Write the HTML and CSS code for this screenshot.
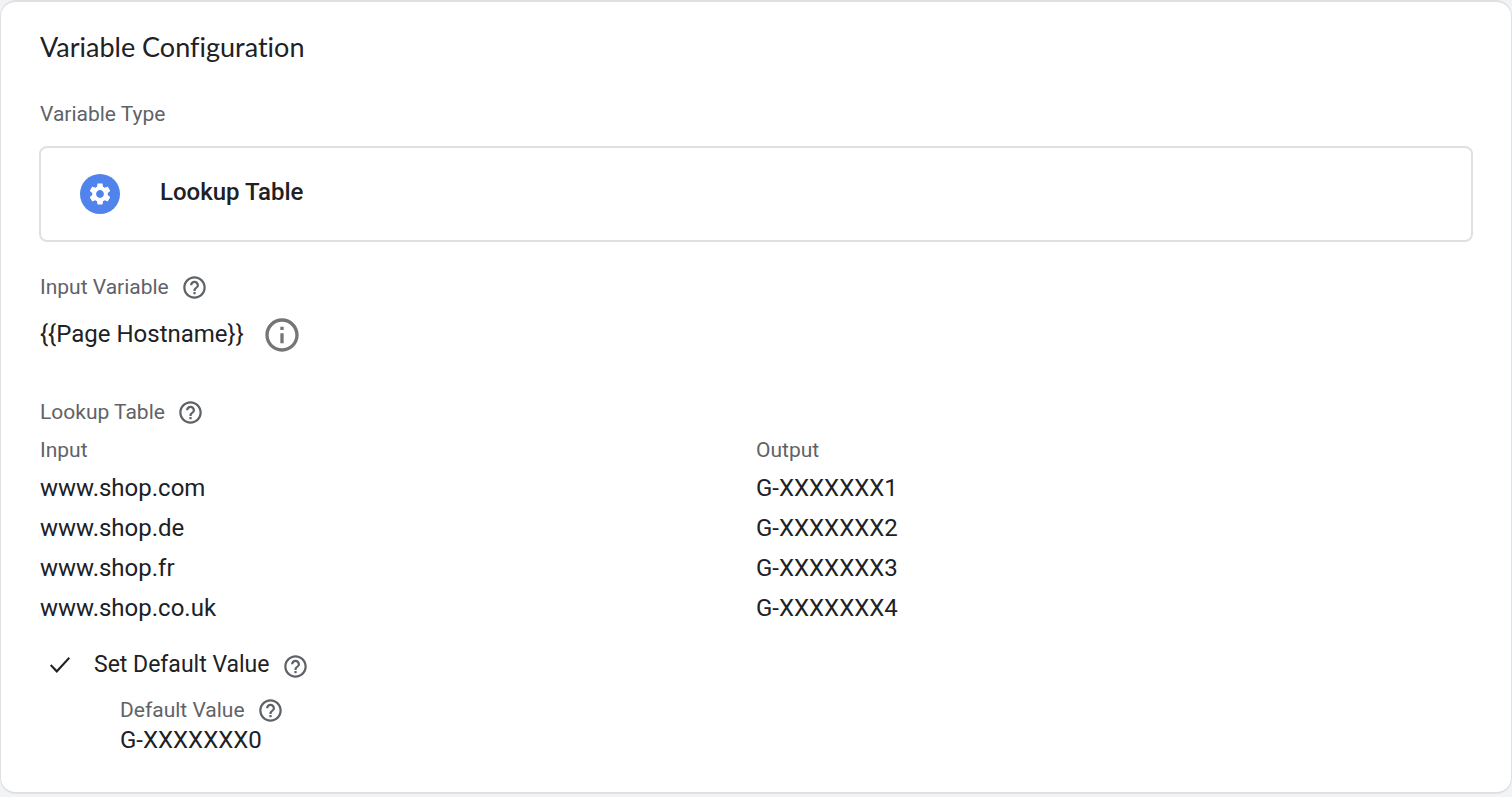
FILE: index.html
```html
<!DOCTYPE html>
<html lang="en">
<head>
  <meta charset="UTF-8" />
  <meta name="viewport" content="width=device-width, initial-scale=1.0"/>
  <title>Variable Configuration</title>
  <link rel="stylesheet" href="styles.css">
</head>
<body>
  <svg class="icon-defs" aria-hidden="true">
    <symbol id="icon-help" viewBox="0 0 24 24">
      <path d="M11 18h2v-2h-2v2zm1-16C6.48 2 2 6.48 2 12s4.48 10 10 10 10-4.48 10-10S17.52 2 12 2zm0 18c-4.41 0-8-3.59-8-8s3.59-8 8-8 8 3.59 8 8-3.59 8-8 8zm0-14c-2.21 0-4 1.79-4 4h2c0-1.1.9-2 2-2s2 .9 2 2c0 2-3 1.75-3 5h2c0-2.25 3-2.5 3-5 0-2.21-1.79-4-4-4z"/>
    </symbol>
  </svg>

  <main class="card">
    <h1 class="card-title">Variable Configuration</h1>

    <section class="variable-type">
      <h2 class="label" id="typeLabel">Variable Type</h2>
      <button type="button" class="type-button" aria-describedby="typeLabel">
        <span class="type-icon">
          <svg viewBox="0 0 24 24" aria-hidden="true">
            <path d="M19.14 12.94c.04-.3.06-.61.06-.94 0-.32-.02-.64-.07-.94l2.03-1.58c.18-.14.23-.41.12-.61l-1.92-3.32c-.12-.22-.37-.29-.59-.22l-2.39.96c-.5-.38-1.03-.7-1.62-.94l-.36-2.54c-.04-.24-.24-.41-.48-.41h-3.84c-.24 0-.43.17-.47.41l-.36 2.54c-.59.24-1.13.57-1.62.94l-2.39-.96c-.22-.08-.47 0-.59.22L2.74 8.87c-.12.21-.08.47.12.61l2.03 1.58c-.05.3-.09.63-.09.94s.02.64.07.94l-2.03 1.58c-.18.14-.23.41-.12.61l1.92 3.32c.12.22.37.29.59.22l2.39-.96c.5.38 1.03.7 1.62.94l.36 2.54c.05.24.24.41.48.41h3.84c.24 0 .44-.17.47-.41l.36-2.54c.59-.24 1.13-.56 1.62-.94l2.39.96c.22.08.47 0 .59-.22l1.92-3.32c.12-.22.07-.47-.12-.61l-2.01-1.58zM12 15.6c-1.98 0-3.6-1.62-3.6-3.6s1.62-3.6 3.6-3.6 3.6 1.62 3.6 3.6-1.62 3.6-3.6 3.6z"/>
          </svg>
        </span>
        <span class="type-name">Lookup Table</span>
      </button>
    </section>

    <section class="input-variable">
      <div class="label-row">
        <h2 class="label">Input Variable</h2>
        <button type="button" class="icon-button" aria-label="Help"><svg><use href="#icon-help"/></svg></button>
      </div>
      <div class="variable-row">
        <span class="value">{{Page Hostname}}</span>
        <button type="button" class="icon-button info" aria-label="Variable info">
          <svg viewBox="0 0 24 24"><path d="M11 7h2v2h-2zm0 4h2v6h-2zm1-9C6.48 2 2 6.48 2 12s4.48 10 10 10 10-4.48 10-10S17.52 2 12 2zm0 18c-4.41 0-8-3.59-8-8s3.59-8 8-8 8 3.59 8 8-3.59 8-8 8z"/></svg>
        </button>
      </div>
    </section>

    <section class="lookup">
      <div class="label-row">
        <h2 class="label" id="lookupLabel">Lookup Table</h2>
        <button type="button" class="icon-button" aria-label="Help"><svg><use href="#icon-help"/></svg></button>
      </div>
      <table class="lookup-table" aria-labelledby="lookupLabel">
        <thead>
          <tr>
            <th>Input</th>
            <th>Output</th>
          </tr>
        </thead>
        <tbody>
          <tr>
            <td>www.shop.com</td>
            <td>G-XXXXXXX1</td>
          </tr>
          <tr>
            <td>www.shop.de</td>
            <td>G-XXXXXXX2</td>
          </tr>
          <tr>
            <td>www.shop.fr</td>
            <td>G-XXXXXXX3</td>
          </tr>
          <tr>
            <td>www.shop.co.uk</td>
            <td>G-XXXXXXX4</td>
          </tr>
        </tbody>
      </table>
    </section>

    <section class="default-value">
      <div class="check-row">
        <input type="checkbox" id="setDefault" class="check" checked />
        <label for="setDefault" class="check-label">Set Default Value</label>
        <button type="button" class="icon-button" aria-label="Help"><svg><use href="#icon-help"/></svg></button>
      </div>
      <div class="default-field">
        <div class="label-row">
          <h2 class="label">Default Value</h2>
          <button type="button" class="icon-button" aria-label="Help"><svg><use href="#icon-help"/></svg></button>
        </div>
        <div class="value">G-XXXXXXX0</div>
      </div>
    </section>
  </main>
</body>
</html>
```

FILE: styles.css
```css
* {
  box-sizing: border-box;
}

body {
  margin: 0;
  background-color: #f1f3f4;
  color: #202124;
  font-family: Roboto, Arial, sans-serif;
  font-size: 24px;
  line-height: 32px;
}

h1, h2 {
  margin: 0;
  font-weight: 400;
}

button {
  font: inherit;
  color: inherit;
  cursor: pointer;
}

.icon-defs {
  display: none;
}

.card {
  padding: 29px 39px 36px;
  background-color: #fff;
  border: solid #dfe0e4;
  border-width: 2px 1px;
  border-radius: 16px;
}

.card-title {
  font-family: Lato, Roboto, sans-serif;
  font-size: 27px;
  font-variant-ligatures: none;
  line-height: 32px;
}

.label,
.lookup-table th {
  color: #5f6368;
  font-size: 21px;
  font-weight: 400;
  line-height: 24px;
}

.label-row {
  display: flex;
  align-items: center;
  gap: 12px;
}

.variable-type {
  margin-top: 39px;
}

.type-button {
  display: flex;
  align-items: center;
  gap: 40px;
  width: calc(100% + 2px);
  height: 96px;
  margin: 20px -1px 0;
  padding: 0 39px;
  background-color: #fff;
  border: 2px solid #dfe0e4;
  border-radius: 8px;
  font-weight: 500;
  text-align: left;
}

.type-icon {
  display: flex;
  align-items: center;
  justify-content: center;
  width: 40px;
  height: 40px;
  background-color: #5183ec;
  border-radius: 50%;
}

.type-icon svg {
  width: 26px;
  height: 26px;
  fill: #fff;
}

.type-name {
  padding-bottom: 4px;
}

.icon-button {
  display: flex;
  padding: 2px 0 0;
  background: none;
  border: 0;
}

.icon-button svg {
  width: 27px;
  height: 27px;
  fill: #5f6368;
}

.icon-button.info svg {
  width: 40px;
  height: 40px;
  fill: #757575;
}

.input-variable {
  margin-top: 30px;
}

.variable-row {
  display: flex;
  align-items: center;
  gap: 18px;
  margin-top: 12px;
}

.lookup {
  margin-top: 42px;
}

.lookup-table {
  width: 100%;
  margin-top: 12px;
  border-collapse: collapse;
  table-layout: fixed;
}

.lookup-table th,
.lookup-table td {
  padding: 0;
  text-align: left;
}

.lookup-table th {
  padding-bottom: 6px;
}

.lookup-table td {
  height: 40px;
}

.default-value {
  margin-top: 21px;
}

.check-row {
  display: flex;
  align-items: center;
  gap: 12px;
}

.check {
  appearance: none;
  width: 20px;
  height: 16px;
  margin: 0 12px 0 10px;
}

.check:checked {
  background-color: #202124;
  clip-path: polygon(0 54%, 7% 45%, 34% 80%, 93% 0, 100% 9%, 34% 100%);
}

.check-label {
  font-size: 23px;
}

.default-field {
  margin: 14px 0 0 80px;
}
```
